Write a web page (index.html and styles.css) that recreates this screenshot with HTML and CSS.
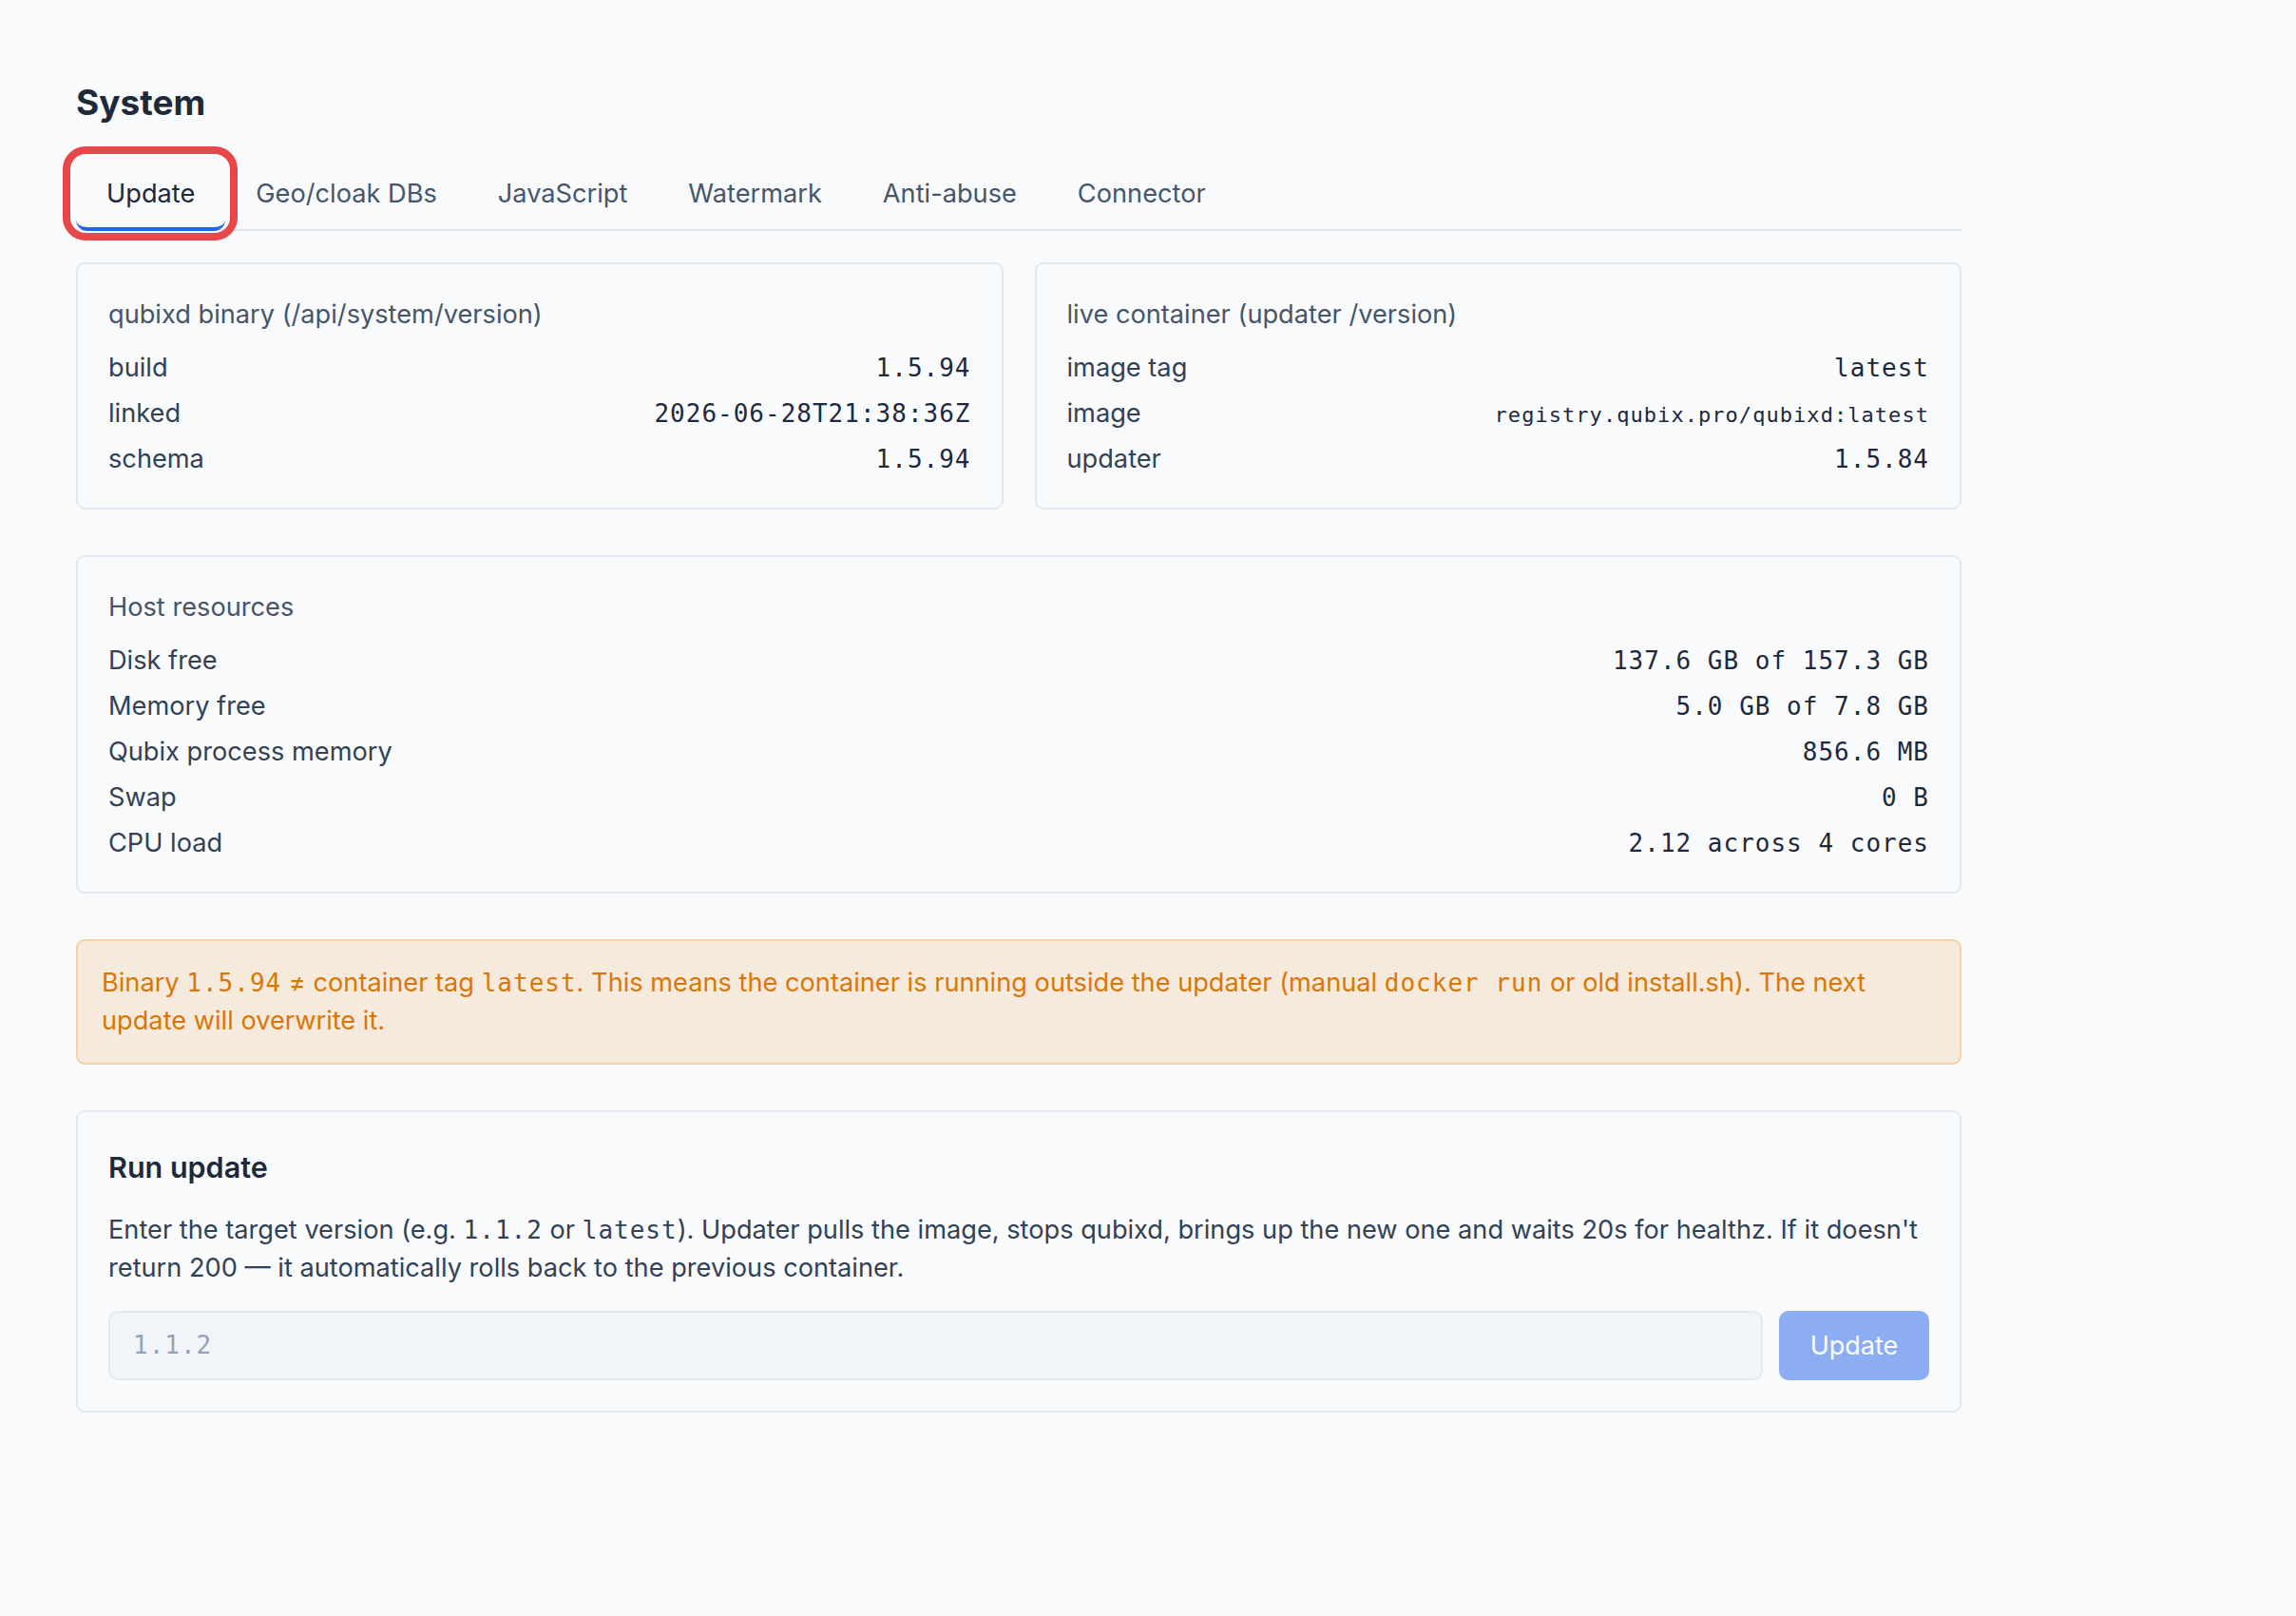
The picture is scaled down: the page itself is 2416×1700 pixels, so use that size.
FILE: index.html
```html
<!DOCTYPE html>
<html lang="en">
<head>
    <meta charset="UTF-8">
    <meta name="viewport" content="width=device-width, initial-scale=1.0">
    <title>System</title>
    <link rel="stylesheet" href="styles.css">
</head>
<body>

<main class="page">
    <h1 class="page-title">System</h1>

    <!-- Section tabs -->
    <nav class="tabs">
        <a class="tab active" href="#">Update<span class="tab-highlight"></span></a>
        <a class="tab" href="#">Geo/cloak DBs</a>
        <a class="tab" href="#">JavaScript</a>
        <a class="tab" href="#">Watermark</a>
        <a class="tab" href="#">Anti-abuse</a>
        <a class="tab" href="#">Connector</a>
    </nav>

    <div class="version-grid">
        <section class="card">
            <div class="card-title">qubixd binary (/api/system/version)</div>
            <div class="kv">
                <div class="kv-row"><span>build</span><span class="mono">1.5.94</span></div>
                <div class="kv-row"><span>linked</span><span class="mono">2026-06-28T21:38:36Z</span></div>
                <div class="kv-row"><span>schema</span><span class="mono">1.5.94</span></div>
            </div>
        </section>

        <section class="card">
            <div class="card-title">live container (updater /version)</div>
            <div class="kv">
                <div class="kv-row"><span>image tag</span><span class="mono">latest</span></div>
                <div class="kv-row"><span>image</span><span class="mono small">registry.qubix.pro/qubixd:latest</span></div>
                <div class="kv-row"><span>updater</span><span class="mono">1.5.84</span></div>
            </div>
        </section>
    </div>

    <section class="card">
        <div class="card-title">Host resources</div>
        <div class="kv">
            <div class="kv-row"><span>Disk free</span><span class="mono">137.6 GB of 157.3 GB</span></div>
            <div class="kv-row"><span>Memory free</span><span class="mono">5.0 GB of 7.8 GB</span></div>
            <div class="kv-row"><span>Qubix process memory</span><span class="mono">856.6 MB</span></div>
            <div class="kv-row"><span>Swap</span><span class="mono">0 B</span></div>
            <div class="kv-row"><span>CPU load</span><span class="mono">2.12 across 4 cores</span></div>
        </div>
    </section>

    <div class="warning">
        Binary <code>1.5.94</code> ≠ container tag <code>latest</code>. This means the container is running outside the updater (manual <code>docker run</code> or old install.sh). The next update will overwrite it.
    </div>

    <section class="card">
        <h2 class="update-title">Run update</h2>
        <p class="update-text">Enter the target version (e.g. <code>1.1.2</code> or <code>latest</code>). Updater pulls the image, stops qubixd, brings up the new one and waits 20s for healthz. If it doesn't return 200 — it automatically rolls back to the previous container.</p>
        <form class="update-form">
            <input type="text" class="version-input" placeholder="1.1.2">
            <button type="button" class="update-btn" disabled>Update</button>
        </form>
    </section>
</main>

</body>
</html>
```

FILE: styles.css
```css
body {
    margin: 0;
    background-color: #f8fafc;
    font-family: Inter, "Noto Sans", sans-serif;
    font-size: 27.2px;
    line-height: 39px;
    color: #334155;
}

.page {
    width: 1984px;
    margin-left: 80px;
    padding-top: 86px;
    padding-bottom: 160px;
}

.page-title {
    margin: 0;
    font-size: 37px;
    line-height: 44px;
    font-weight: 700;
    color: #1e293b;
}

/* tabs */
.tabs {
    display: flex;
    margin-top: 40px;
    border-bottom: 2px solid #e2e8f0;
}

.tab {
    position: relative;
    padding: 14px 32px 15px;
    font-size: 27.2px;
    line-height: 40px;
    color: #475569;
    text-decoration: none;
    border-bottom: 4px solid transparent;
    border-radius: 12px;
    margin-bottom: -2px;
}

.tab.active {
    color: #1e293b;
    border-bottom-color: #2563eb;
}

/* red highlight drawn around the active tab */
.tab-highlight {
    position: absolute;
    left: -14px;
    right: -13px;
    top: -16px;
    bottom: -14px;
    border: 8px solid #e8474a;
    border-radius: 24px;
}

/* cards */
.version-grid {
    display: grid;
    grid-template-columns: 1fr 1fr;
    gap: 33px;
    margin-top: 33px;
}

.card {
    border: 2px solid #e2e8f0;
    border-radius: 9px;
    padding: 32.5px 32px;
    background-color: #f8fafc;
}

.page > .card,
.warning {
    margin-top: 48px;
}

.card-title {
    color: #475569;
    margin-bottom: 17px;
}

.kv {
    display: flex;
    flex-direction: column;
    gap: 9px;
}

.kv-row {
    display: flex;
    justify-content: space-between;
    align-items: baseline;
    height: 39px;
}

.mono,
code {
    font-family: "DejaVu Sans Mono", "Liberation Mono", monospace;
    font-size: 26px;
    line-height: 1;
    letter-spacing: 1px;
    color: #1e293b;
}

.mono.small {
    font-size: 22px;
    letter-spacing: 1.05px;
}

/* warning banner */
.warning {
    border: 2px solid #f2d2a6;
    border-radius: 9px;
    background-color: #f6eadc;
    color: #d97706;
    padding: 24px 25px;
    line-height: 40px;
}

.warning code {
    color: #d97706;
}

/* run update */
.update-title {
    margin: 3px 0 0;
    font-size: 30.5px;
    line-height: 43px;
    font-weight: 600;
    color: #1e293b;
}

.update-text {
    margin: 25px 0 0;
    line-height: 40px;
}

.update-text code {
    color: #334155;
}

.update-form {
    display: flex;
    gap: 17px;
    margin-top: 25px;
}

.version-input {
    flex: 1;
    height: 73px;
    box-sizing: border-box;
    padding: 0 24px;
    border: 2px solid #e2e8f0;
    border-radius: 10px;
    background-color: #f1f5f9;
    font-family: "DejaVu Sans Mono", "Liberation Mono", monospace;
    font-size: 26px;
    letter-spacing: 1px;
    color: #1e293b;
}

.version-input::placeholder {
    color: #94a3b8;
}

.update-btn {
    width: 158px;
    height: 73px;
    border: none;
    border-radius: 10px;
    background-color: #2563eb;
    opacity: 0.5;
    color: white;
    font-family: Inter, "Noto Sans", sans-serif;
    font-size: 27px;
}
```
